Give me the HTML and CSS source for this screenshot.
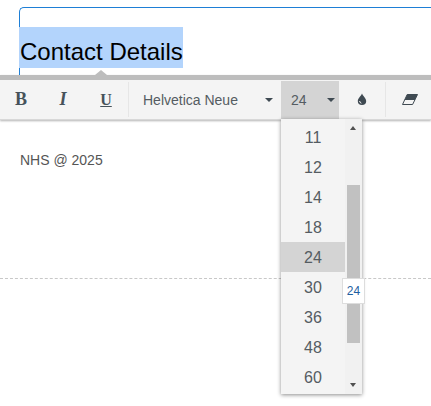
FILE: index.html
```html
<!DOCTYPE html>
<html lang="en">
<head>
<meta charset="utf-8">
<title>Editor</title>
<link rel="stylesheet" href="styles.css">
</head>
<body>
<div class="page">
  <section class="header">
    <div class="editable">
      <h1 class="heading"><span class="selected">Contact Details</span></h1>
    </div>
  </section>
  <div class="toolbar">
    <span class="pointer"></span>
    <button class="tool tool-b">B</button>
    <button class="tool tool-i">I</button>
    <button class="tool tool-u">U</button>
    <span class="sep"></span>
    <div class="select select-font"><span>Helvetica Neue</span><i class="caret"></i></div>
    <div class="select select-size"><span>24</span><i class="caret"></i></div>
    <button class="tool tool-drop">
      <svg width="10" height="12" viewBox="0 0 10 12"><path d="M5 0.5C5.6 2.6 9.2 5.2 9.2 8A4.2 4 0 0 1 .8 8C.8 5.2 4.4 2.6 5 .5Z" fill="#3f4a52"/><path d="M2.6 8A2.4 2.4 0 0 0 4.4 10.2" fill="none" stroke="#f4f4f4" stroke-width="1"/></svg>
    </button>
    <span class="sep"></span>
    <button class="tool tool-erase">
      <svg width="16" height="11" viewBox="0 0 16 11"><path d="M5.2 .5H15.5L10.6 10.5H.5Z" fill="none" stroke="#3f4a52"/><path d="M5.2 .5H15.5L12.8 6H2.6Z" fill="#3f4a52"/></svg>
    </button>
  </div>
  <section class="body">
    <p class="footer-text">NHS @ 2025</p>
    <hr class="dashed">
  </section>
  <div class="menu">
    <ul class="options">
      <li>11</li><li>12</li><li>14</li><li>18</li><li class="active">24</li><li>30</li><li>36</li><li>48</li><li>60</li>
    </ul>
    <div class="scrollbar">
      <i class="arrow-up"></i>
      <div class="thumb"></div>
      <i class="arrow-down"></i>
    </div>
  </div>
  <div class="tip">24</div>
</div>
</body>
</html>
```
FILE: styles.css
```css
* { box-sizing: border-box; }
html, body { margin: 0; padding: 0; background: #fff; }
body { font-family: "Liberation Sans", Arial, sans-serif; overflow: hidden; }
.page { position: relative; width: 431px; height: 406px; overflow: hidden; }

.header { height: 75px; padding: 7px 0 0 19px; }
.editable { height: 68px; padding-top: 19px; border: 1px solid #1e7fd6; border-right: 0; border-bottom: 0; border-top-left-radius: 5px; }
.heading { margin: 0 0 0 -1px; font-size: 24px; font-weight: 400; line-height: 41px; color: #000; }
.selected { display: inline-block; height: 41px; padding-left: 1px; line-height: 49px; background: #b3d4fc; }

.toolbar { position: relative; display: flex; align-items: stretch; height: 45px; border-top: 5px solid #bdbdbd; background: #f4f4f4; box-shadow: 0 1px 2px rgba(0,0,0,.3); border-bottom: 1px solid #d8d8d8; }
.pointer { position: absolute; left: 95px; top: -10px; border: 6px solid transparent; border-top: 0; border-bottom: 5px solid #bdbdbd; }
.tool { display: flex; align-items: center; justify-content: center; padding: 0; border: 0; background: none; color: #46525a; font-family: "Liberation Serif", serif; font-size: 18px; }
.tool-b { width: 42px; font-weight: 700; }
.tool-i { width: 42px; font-style: italic; font-weight: 700; }
.tool-u { width: 44px; font-weight: 700; text-decoration: underline; font-size: 16px; }
.sep { width: 1px; margin: 2px 0; background: #e6e6e6; }
.select { display: flex; align-items: center; justify-content: space-between; font-size: 14px; color: #555c62; }
.select-font { width: 152px; padding: 0 8px 0 14px; }
.select-size { width: 58px; padding: 0 4px 0 10px; margin-top: 1px; background: #d4d4d4; }
.caret { display: block; border: 4px solid transparent; border-bottom: 0; border-top: 4px solid #3f4a52; }
.tool-drop { width: 46px; padding-bottom: 1px; }
.tool-erase { width: 45px; padding-left: 2px; }

.body { padding: 0 20px; }
.footer-text { margin: 0; padding-top: 32px; font-size: 14px; line-height: 17px; color: #555; }
.dashed { margin: 109px -20px 0; border: 0; border-top: 1px dashed #c8c8c8; }

.menu { position: absolute; left: 281px; top: 119px; display: flex; width: 81px; height: 275px; background: #f4f4f4; box-shadow: 0 1px 4px rgba(0,0,0,.45); }
.options { margin: 3px 0 0; padding: 0; width: 64px; list-style: none; font-size: 16px; text-align: center; color: #555c62; }
.options li { height: 30px; line-height: 32px; }
.active { background: #d4d4d4; }
.scrollbar { position: relative; width: 17px; background: #f1f1f1; }
.thumb { position: absolute; left: 2px; top: 66px; width: 13px; height: 158px; background: #c1c1c1; }
.arrow-up, .arrow-down { position: absolute; left: 5px; border: 3.5px solid transparent; }
.arrow-up { top: 7px; border-top: 0; border-bottom: 4px solid #505050; }
.arrow-down { bottom: 7px; border-bottom: 0; border-top: 4px solid #505050; }
.tip { position: absolute; left: 342px; top: 278px; width: 23px; height: 26px; border: 1px solid #ddd; background: #fff; font-size: 12px; line-height: 24px; text-align: center; color: #1f5f9f; }
```
